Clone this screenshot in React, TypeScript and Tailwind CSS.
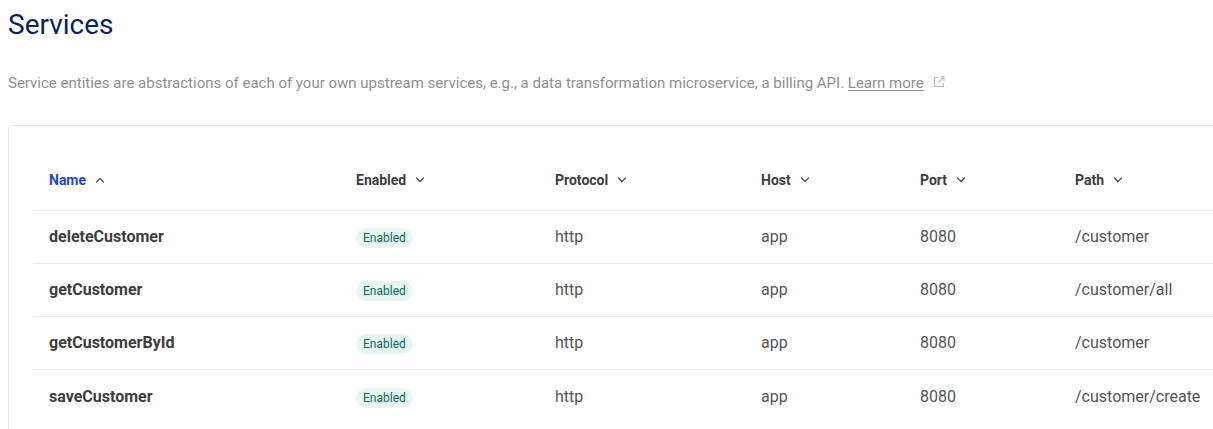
import React from "react";

const rows = [
  { name: "deleteCustomer", path: "/customer" },
  { name: "getCustomer", path: "/customer/all" },
  { name: "getCustomerById", path: "/customer" },
  { name: "saveCustomer", path: "/customer/create" },
];

function Chevron({ up = false }: { up?: boolean }) {
  return (
    <svg width="10" height="6" viewBox="0 0 10 6" className="ml-[9px]" fill="none">
      {up ? (
        <path d="M1.5 5 L5 1.5 L8.5 5" stroke="#555" strokeWidth="1.3" strokeLinecap="round" strokeLinejoin="round" />
      ) : (
        <path d="M1.5 1 L5 4.5 L8.5 1" stroke="#555" strokeWidth="1.3" strokeLinecap="round" strokeLinejoin="round" />
      )}
    </svg>
  );
}

const cols = ["w-[307px]", "w-[199px]", "w-[206px]", "w-[159px]", "w-[155px]", "flex-1"];

export default function App() {
  return (
    <div className="w-[1213px] h-[429px] overflow-hidden bg-white" style={{ fontFamily: "Roboto, 'Liberation Sans', sans-serif" }}>
      <div className="pl-2">
        <h1 className="pt-[7px] text-[28px] leading-[36px] text-[#0b1f5e]">Services</h1>
        <p className="mt-[30px] text-[15px] leading-[20px] text-[#8f8f8f] flex items-center">
          <span>
            Service entities are abstractions of each of your own upstream services, e.g., a data transformation microservice, a billing API.{" "}
            <span className="underline underline-offset-2">Learn more </span>
          </span>
          <svg width="12" height="12" viewBox="0 0 12 12" className="ml-[9px] mb-[2px]" fill="none">
            <path d="M5 1.5 H1.5 V10.5 H10.5 V7" stroke="#bdbdbd" strokeWidth="1.2" />
            <path d="M7 1 H11 V5 M11 1 L5.5 6.5" stroke="#bdbdbd" strokeWidth="1.2" />
          </svg>
        </p>
        <div className="mt-[32px] w-[1260px] border border-[#e6e6e6] rounded-[3px] pt-6 pl-6 pb-6">
          <div className="flex h-[61px] items-center border-b border-[#ebebeb] text-[14px] font-bold">
            <div className={`${cols[0]} pl-4 flex items-center text-[#1c47c9]`}>
              Name <Chevron up />
            </div>
            {["Enabled", "Protocol", "Host", "Port", "Path"].map((h, i) => (
              <div key={h} className={`${cols[i + 1]} pl-4 flex items-center text-[#3d3d3d]`}>
                {h} <Chevron />
              </div>
            ))}
          </div>
          {rows.map((r, idx) => (
            <div
              key={r.name}
              className={`flex h-[53px] items-center text-[16px] text-[#555] ${idx < rows.length - 1 ? "border-b border-[#ebebeb]" : ""}`}
            >
              <div className={`${cols[0]} pl-4 text-[16px] font-bold text-[#3d3d3d]`}>{r.name}</div>
              <div className={`${cols[1]} pl-4`}>
                <span className="inline-flex items-center h-[20px] px-[7px] rounded-full bg-[#e8f6f2] text-[12px] text-[#0d6b5b]">Enabled</span>
              </div>
              <div className={`${cols[2]} pl-4`}>http</div>
              <div className={`${cols[3]} pl-4`}>app</div>
              <div className={`${cols[4]} pl-4`}>8080</div>
              <div className={`${cols[5]} pl-4`}>{r.path}</div>
            </div>
          ))}
        </div>
      </div>
    </div>
  );
}
